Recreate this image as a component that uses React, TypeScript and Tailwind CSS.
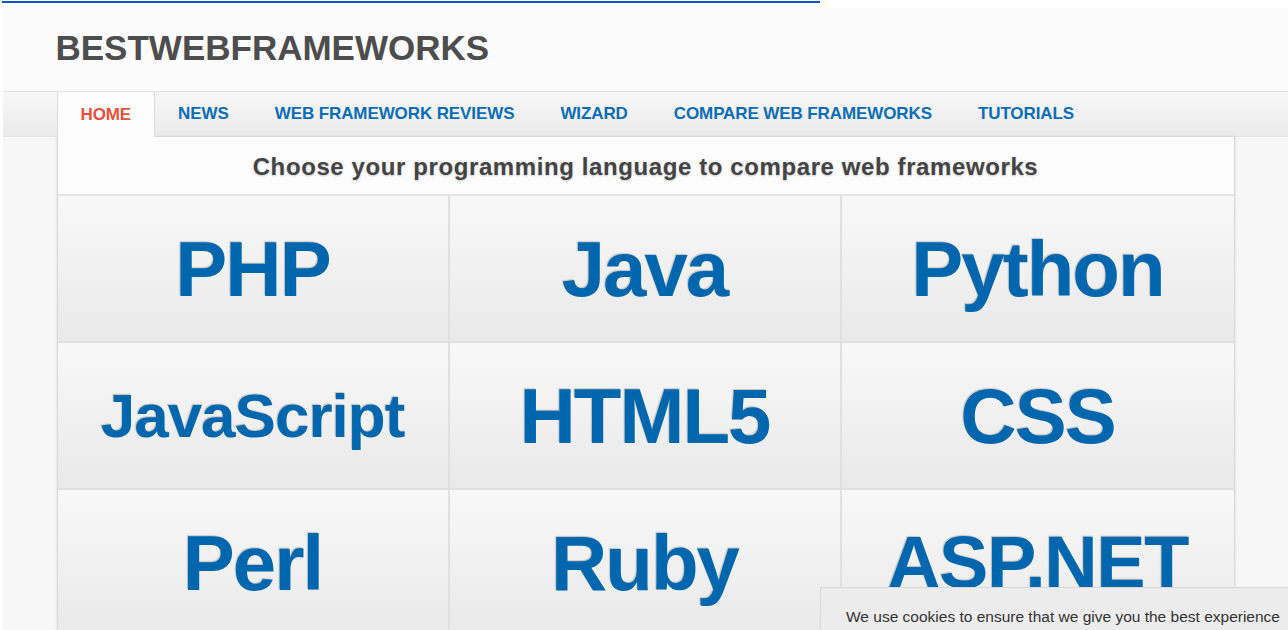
import React from "react";

const navItems = [
  "HOME",
  "NEWS",
  "WEB FRAMEWORK REVIEWS",
  "WIZARD",
  "COMPARE WEB FRAMEWORKS",
  "TUTORIALS",
];

// each tile gets its own size class, the long names are squeezed a bit
const languages = [
  { name: "PHP", size: "text-[78px] tracking-[-2px]" },
  { name: "Java", size: "text-[78px] tracking-[-2px]" },
  { name: "Python", size: "text-[78px] tracking-[-2px]" },
  { name: "JavaScript", size: "text-[62px] tracking-[-1px]" },
  { name: "HTML5", size: "text-[78px] tracking-[-2px]" },
  { name: "CSS", size: "text-[78px] tracking-[-2px]" },
  { name: "Perl", size: "text-[78px] tracking-[-2px]" },
  { name: "Ruby", size: "text-[78px] tracking-[-2px]" },
  { name: "ASP.NET", size: "text-[74px] tracking-[-1.5px]" },
];

const App = () => {
  return (
    <div className="min-h-screen bg-white font-['Liberation_Sans',Arial,sans-serif]">
      <div className="h-[8px] pt-px">
        <div className="ml-[2px] h-[2px] w-[818px] bg-[#0b55cf]" />
      </div>

      <div className="ml-[3px] bg-[#f7f7f7]">
        {/* Site header */}
        <header className="h-[83px] bg-[#fbfbfb]">
          <div className="mx-auto max-w-[1180px] pt-[22px]">
            <a className="text-[35px] font-bold leading-none text-[#4d4d4d]">
              BESTWEBFRAMEWORKS
            </a>
          </div>
        </header>

        {/* Main navigation */}
        <nav className="h-[46px] border-y border-[#e2e2e2] bg-gradient-to-b from-[#f7f7f7] to-[#ebebeb]">
          <ul className="mx-auto flex h-full max-w-[1178px]">
            {navItems.map((item, i) => (
              <li
                key={item}
                className={
                  i === 0
                    ? "-mb-px flex h-[45px] items-center border-x border-[#dcdcdc] bg-[#fcfcfc] px-[23px] text-[17px] font-bold tracking-[-0.1px] text-[#e8513a]"
                    : "flex h-full items-center px-[23px] text-[17px] font-bold tracking-[-0.1px] text-[#0b6db7]"
                }
              >
                {item}
              </li>
            ))}
          </ul>
        </nav>

        {/* Language picker */}
        <main className="mx-auto max-w-[1178px] border-x border-[#d9d9d9] bg-[#fcfcfc] shadow-[0_0_3px_rgba(0,0,0,0.12)]">
          <h2 className="flex h-[59px] items-center justify-center border-b-2 border-[#e6e6e6] pt-[3px] text-[24px] font-bold tracking-[0.6px] text-[#444] [text-shadow:0_1px_2px_rgba(0,0,0,0.2)]">
            Choose your programming language to compare web frameworks
          </h2>
          <div className="grid grid-cols-3">
            {languages.map((lang, i) => (
              <a
                key={lang.name}
                className={
                  (i % 3 === 2 ? "" : "border-r-2 ") +
                  "flex h-[147px] items-center justify-center border-b-2 border-[#e0e0e0] bg-gradient-to-b from-[#f8f8f8] to-[#e9e9e9]"
                }
              >
                <span
                  className={
                    lang.size +
                    " font-bold leading-none text-[#0067ae] [text-shadow:-1px_-1px_1px_rgba(0,0,0,0.2)]"
                  }
                >
                  {lang.name}
                </span>
              </a>
            ))}
          </div>
        </main>
      </div>

      {/* Cookie notice */}
      <div className="fixed bottom-0 left-[820px] right-0 top-[587px] whitespace-nowrap border-l border-t border-[#d8d8d8] bg-[#ececec] pl-[25px] pt-[21px] text-[15.5px] leading-none text-[#333]">
        We use cookies to ensure that we give you the best experience
      </div>
    </div>
  );
};

export default App;
